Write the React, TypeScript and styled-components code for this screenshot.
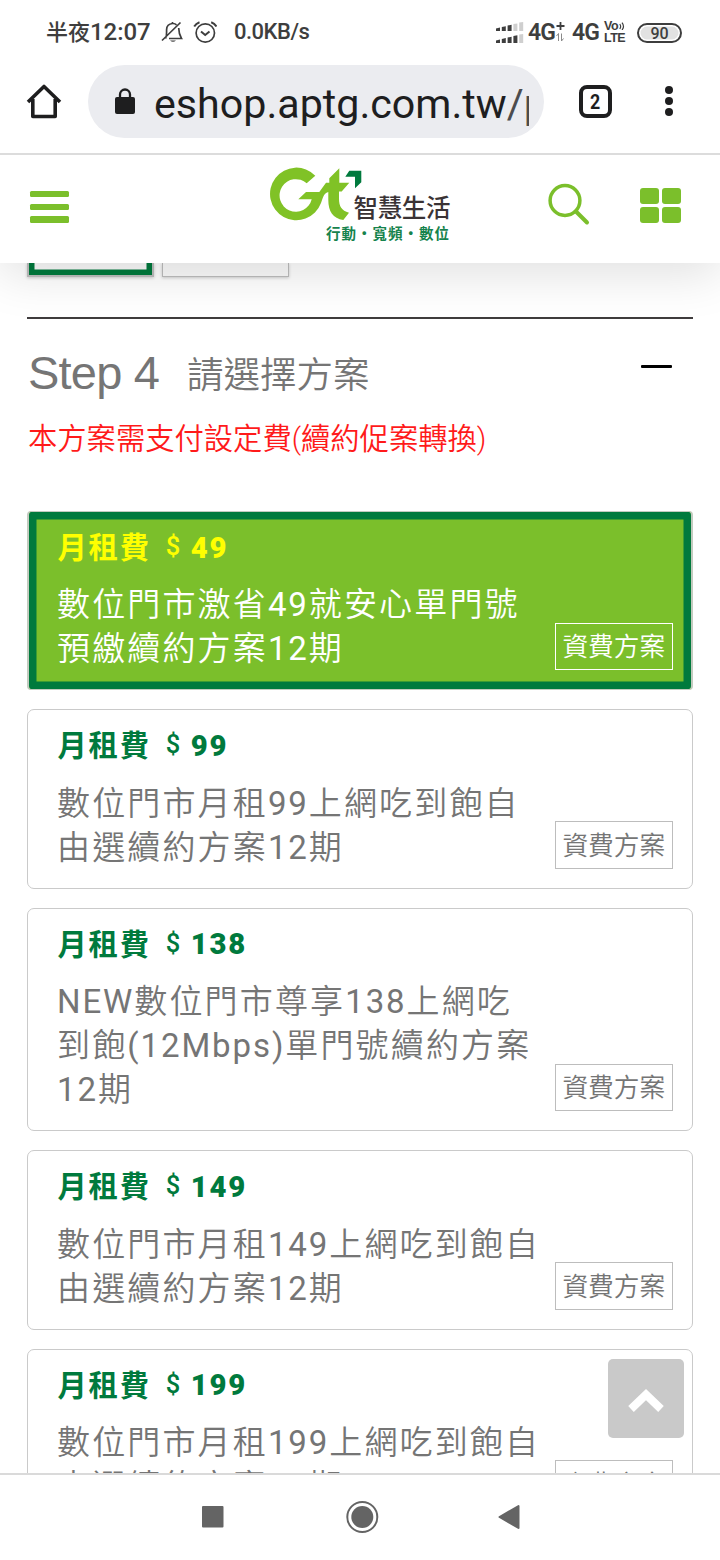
import React from "react";
import styled, { createGlobalStyle } from "styled-components";

const GREEN = "#7bbf2b";
const DEEP = "#007a3d";
const CJK = `"Noto Sans CJK TC"`;

const GlobalStyle = createGlobalStyle`
  * { box-sizing: border-box; }
  body { margin: 0; background: #fff; font-family: Roboto, ${CJK}, sans-serif; }
`;

const Screen = styled.div`
  width: 720px;
  height: 1560px;
  display: flex;
  flex-direction: column;
  overflow: hidden;
  background: #fff;
`;

const StatusBar = styled.div`
  position: relative;
  z-index: 2;
  background: #fff;
  height: 65px;
  flex: none;
  display: flex;
  align-items: center;
  padding: 0 38px 0 46px;
  color: #3e3e3e;
  font-size: 24px;
  font-weight: 500;
  line-height: 30px;
  white-space: nowrap;
`;
const Clock = styled.span`
  width: 115px;
  letter-spacing: -0.05px;
`;
const CjkPart = styled.span`
  font-size: 22px;
  letter-spacing: 0;
`;
const Speed = styled.span`
  margin: -2px 0 0 17px;
  font-size: 22px;
  letter-spacing: -0.5px;
`;
const Spacer = styled.div`
  flex: 1;
`;
const Network = styled.span<{ $gap: number }>`
  font-size: 23px;
  font-weight: 600;
  letter-spacing: -0.9px;
  margin-left: ${(p) => p.$gap}px;
`;
const VoLte = styled.span`
  display: flex;
  flex-direction: column;
  width: 23px;
  height: 23px;
  margin-left: 5px;
  font: 700 12.5px/11.5px "Liberation Sans", sans-serif;
  letter-spacing: -0.5px;
`;
const VoRow = styled.span`
  display: flex;
  gap: 1px;
`;
const Battery = styled.span`
  width: 45px;
  height: 20px;
  margin-left: 10px;
  border: 2px solid #3e3e3e;
  border-radius: 10px;
  background: #e2e2e2;
  box-shadow: inset 0 0 0 1.5px #fff;
  font-size: 16px;
  line-height: 17px;
  text-align: center;
`;

const BrowserBar = styled.div`
  position: relative;
  z-index: 2;
  background: #fff;
  height: 90px;
  flex: none;
  display: flex;
  align-items: flex-start;
  border-bottom: 2px solid #dcdcdc;
  padding-left: 26px;
`;
const BarIcon = styled.div<{ $width: number; $left?: number }>`
  width: ${(p) => p.$width}px;
  height: 73px;
  margin-left: ${(p) => p.$left ?? 0}px;
  display: flex;
  align-items: center;
`;
const AddressField = styled.div`
  width: 456px;
  height: 73px;
  margin-left: 26px;
  padding-left: 26px;
  display: flex;
  align-items: center;
  border-radius: 37px;
  background: #ebecf0;
`;
const Address = styled.div`
  width: 375px;
  margin-left: 18px;
  overflow: hidden;
  white-space: nowrap;
  color: #1e1e1f;
  font-size: 41.2px;
  line-height: 60px;
  padding-top: 4px;
`;
const AddressTail = styled.span`
  color: #4c4c4e;
`;
const TabCount = styled.div`
  width: 33px;
  height: 33px;
  border: 4px solid #1e1e1f;
  border-radius: 8px;
  color: #1e1e1f;
  font-size: 21px;
  font-weight: 700;
  line-height: 26px;
  text-align: center;
`;
const TabNumber = styled.span`
  display: inline-block;
  transform: scaleX(0.85);
`;

const SiteHeader = styled.header`
  position: relative;
  z-index: 1;
  height: 108px;
  flex: none;
  display: flex;
  align-items: flex-start;
  background: #fff;
  box-shadow: 0 10px 50px rgba(0, 0, 0, 0.13);
  padding: 0 39px 0 30px;
`;
const Burger = styled.div`
  width: 39px;
  margin-top: 36px;
  display: flex;
  flex-direction: column;
  gap: 6.3px;
`;
const BurgerLine = styled.i`
  height: 6.4px;
  border-radius: 1.5px;
  background: ${GREEN};
`;
const Logo = styled.svg`
  margin: 9px 0 0 197px;
`;
const SearchIcon = styled.svg`
  margin: 27px 0 0 91px;
`;
const Grid = styled.div`
  width: 41px;
  height: 35px;
  margin: 33px 0 0 auto;
  display: grid;
  grid-template-columns: 1fr 1fr;
  grid-template-rows: 1fr 1fr;
  gap: 3px;
`;
const GridTile = styled.i`
  border-radius: 3px;
  background: ${GREEN};
`;

const Page = styled.main`
  height: 1210px;
  flex: none;
  padding: 0 27px;
  overflow: hidden;
`;
const Options = styled.div`
  display: flex;
  gap: 8px;
`;
const Option = styled.div<{ $active?: boolean }>`
  width: 127px;
  height: 14px;
  border: solid #bdbdbd;
  border-width: ${(p) => (p.$active ? "0 2px 2px" : "0 1px 1px")};
  background: #fafafa;
  box-shadow: 0 1px 3px rgba(0, 0, 0, 0.2)
    ${(p) => (p.$active ? `, inset 5.5px 0 0 ${DEEP}, inset -5.5px -5.5px 0 ${DEEP}` : "")};
`;
const Section = styled.section`
  margin-top: 40px;
  border-top: 2px solid #3f3c3d;
`;
const SectionHead = styled.div`
  height: 96px;
  display: flex;
  align-items: center;
  padding: 15px 21px 0 1px;
  color: #757575;
`;
const StepNumber = styled.span`
  width: 159px;
  margin-top: -4px;
  font: 47px/60px "Liberation Sans", sans-serif;
  letter-spacing: -0.8px;
`;
const StepTitle = styled.h2`
  margin: 2px 0 0;
  font-size: 36.5px;
  font-weight: 350;
  line-height: 60px;
`;
const Minus = styled.i`
  width: 31px;
  height: 3px;
  margin: 0 0 16px auto;
  border-radius: 1px;
  background: #000;
`;
const Notice = styled.p`
  margin: 0 0 0 1px;
  height: 96px;
  padding-top: 3px;
  color: #ff1a1a;
  font-size: 29.3px;
  font-weight: 350;
  line-height: 42px;
`;

const Plans = styled.div`
  display: flex;
  flex-direction: column;
  gap: 19px;
`;
const Card = styled.article<{ $active: boolean }>`
  flex: none;
  padding: ${(p) => (p.$active ? "12.6px 18px 19.2px 28px" : "12.6px 19px 19.2px 29px")};
  border: solid ${(p) => (p.$active ? "#c3cbbf" : "#cacaca")};
  border-width: ${(p) => (p.$active ? "1px 2px" : "1px")};
  border-radius: ${(p) => (p.$active ? 4 : 7)}px;
  color: ${(p) => (p.$active ? "#fff" : "#757575")};
  background: ${(p) => (p.$active ? GREEN : "#fff")};
  box-shadow: ${(p) => (p.$active ? `inset 0 0 0 7.5px ${DEEP}` : "none")};
`;
const Fee = styled.div<{ $active: boolean }>`
  height: 46px;
  display: flex;
  align-items: center;
  color: ${(p) => (p.$active ? "#ffff00" : DEEP)};
  font-size: 29.3px;
  font-weight: 700;
  letter-spacing: 1.8px;
`;
const FeeLabel = styled.span`
  margin: -5px 0 0 0.5px;
`;
const Price = styled.span`
  font-weight: 900;
  letter-spacing: 1.7px;
`;
const Currency = styled.span`
  width: 25px;
  margin: -3px 0 0 15px;
  font-size: 25.5px;
  font-weight: 500;
`;
const PlanRow = styled.div`
  display: flex;
  justify-content: space-between;
  align-items: flex-end;
  margin-top: 11.2px;
`;
const PlanName = styled.div`
  position: relative;
  top: 1.5px;
  font-size: 33px;
  font-weight: 350;
  letter-spacing: 2.15px;
  line-height: 44.2px;
  white-space: nowrap;
`;
const Line = styled.div``;
const Latin = styled.span`
  font-weight: 400;
  letter-spacing: 1.9px;
`;
const RateButton = styled.button<{ $active: boolean }>`
  flex: none;
  width: 118.5px;
  height: 47.5px;
  padding: 2px 0 0;
  border: 1.5px solid ${(p) => (p.$active ? "#fff" : "#bdbdbd")};
  background: transparent;
  color: inherit;
  font: 350 25.7px/42px Roboto, ${CJK}, sans-serif;
`;

const ToTop = styled.button`
  position: absolute;
  z-index: 2;
  left: 608px;
  top: 1359px;
  width: 76px;
  height: 79px;
  padding: 7px 0 0;
  border: 0;
  border-radius: 5px;
  background: #c9c9c9;
`;

const NavBar = styled.nav`
  flex: 1;
  display: flex;
  justify-content: center;
  border-top: 2px solid #dadada;
  background: #fff;
`;

type Plan = { price: string; lines: string[]; active?: boolean };

const plans: Plan[] = [
  { price: "49", lines: ["數位門市激省49就安心單門號", "預繳續約方案12期"], active: true },
  { price: "99", lines: ["數位門市月租99上網吃到飽自", "由選續約方案12期"] },
  { price: "138", lines: ["NEW數位門市尊享138上網吃", "到飽(12Mbps)單門號續約方案", "12期"] },
  { price: "149", lines: ["數位門市月租149上網吃到飽自", "由選續約方案12期"] },
  { price: "199", lines: ["數位門市月租199上網吃到飽自", "由選續約方案12期"] },
];

// Latin runs carry a slightly heavier weight than the Chinese text around them.
const mixed = (text: string) =>
  text
    .split(/([\x20-\x7e]+)/)
    .filter(Boolean)
    .map((part, i) => (/^[\x20-\x7e]/.test(part) ? <Latin key={i}>{part}</Latin> : part));

function PlanCard({ price, lines, active = false }: Plan) {
  return (
    <Card $active={active}>
      <Fee $active={active}>
        <FeeLabel>月租費</FeeLabel>
        <Currency>$</Currency>
        <Price>{price}</Price>
      </Fee>
      <PlanRow>
        <PlanName>
          {lines.map((l) => (
            <Line key={l}>{mixed(l)}</Line>
          ))}
        </PlanName>
        <RateButton $active={active}>資費方案</RateButton>
      </PlanRow>
    </Card>
  );
}

const StatusIcons = () => (
  <svg width="56" height="24" viewBox="0 0 56 24" fill="none" stroke="#3e3e3e" strokeWidth="1.7">
    <path d="M4.5 17.5C6 15 5.500 12.500 5.600 8.500Q5.800 3 11.500 2.500Q14 2.300 15.500 3.800M17.700 7Q17.800 13 20.500 17.500H8M1 19.500L19.500 1.500M11.500 1V3" />
    <path d="M9 19.500H15Q12 22.200 9 19.500Z" fill="#3e3e3e" stroke="none" />
    <circle cx="44.300" cy="12" r="9.200" />
    <path d="M40 10.500L44.200 14L48.500 10.500" strokeWidth="2" />
    <path d="M33.200 5.500Q35 2.500 38.500 1.200M50.200 1.200Q53.700 2.500 55.400 5.500" strokeWidth="2" />
  </svg>
);

const Signal = () => (
  <svg width="28" height="22" viewBox="0 0 28 22">
    {[0, 1, 2, 3, 4].map((i) => (
      <React.Fragment key={i}>
        <path
          d={`M${i * 5.8} ${6.5 - i * 1.5}L${i * 5.8 + 4} ${5.6 - i * 1.4}V9H${i * 5.8}Z`}
          fill={i < 3 ? "#3e3e3e" : "#cfcfcf"}
        />
        <path
          d={`M${i * 5.8} ${18.5 - i * 1.5}L${i * 5.8 + 4} ${17.5 - i * 1.4}V21H${i * 5.8}Z`}
          fill={i < 4 ? "#3e3e3e" : "#cfcfcf"}
        />
      </React.Fragment>
    ))}
  </svg>
);

export default function App() {
  return (
    <Screen>
      <GlobalStyle />
      <StatusBar>
        <Clock>
          <CjkPart>半夜</CjkPart>12:07
        </Clock>
        <StatusIcons />
        <Speed>0.0KB/s</Speed>
        <Spacer />
        <Signal />
        <Network $gap={4}>4G</Network>
        <svg width="10" height="22" viewBox="0 0 10 22" fill="none" stroke="#3e3e3e">
          <path d="M5.500 0V8M1.500 4H9.500" strokeWidth="1.800" />
          <path d="M3.500 19V11.500L1.500 14M6.500 11.500V19L8.500 16.500" stroke="#8a8a8a" />
        </svg>
        <Network $gap={7}>4G</Network>
        <VoLte>
          <VoRow>
            Vo
            <svg width="6" height="9" viewBox="0 0 6 9" fill="none" stroke="#3e3e3e" strokeWidth="1.200">
              <path d="M0.800 3Q2.500 5.500 0.800 8M3 1.700Q6 5.500 3 9" />
            </svg>
          </VoRow>
          <span>LTE</span>
        </VoLte>
        <Battery>90</Battery>
      </StatusBar>

      <BrowserBar>
        <BarIcon $width={36}>
          <svg width="36" height="38" viewBox="0 0 36 38" fill="none" stroke="#1e1e1f" strokeWidth="3.600">
            <path d="M2 19L18 3.500L34 19M6.800 16V33.500H29.200V16" strokeLinejoin="round" />
          </svg>
        </BarIcon>
        <AddressField>
          <svg width="22" height="28" viewBox="0 0 22 28">
            <rect x="1" y="9" width="20" height="17" rx="2" fill="#1e1e1f" />
            <path d="M6 10V6.500a5 5 0 0 1 10 0V10" fill="none" stroke="#1e1e1f" strokeWidth="2.300" />
          </svg>
          <Address>
            eshop.aptg.com.tw<AddressTail>/p</AddressTail>
          </Address>
        </AddressField>
        <BarIcon $width={33} $left={35}>
          <TabCount>
            <TabNumber>2</TabNumber>
          </TabCount>
        </BarIcon>
        <BarIcon $width={10} $left={52}>
          <svg width="10" height="34" viewBox="0 0 10 34" fill="#1e1e1f">
            <circle cx="5" cy="5" r="4" />
            <circle cx="5" cy="16" r="4" />
            <circle cx="5" cy="27" r="4" />
          </svg>
        </BarIcon>
      </BrowserBar>

      <SiteHeader>
        <Burger>
          <BurgerLine />
          <BurgerLine />
          <BurgerLine />
        </Burger>
        <Logo width="190" height="84" viewBox="0 0 190 84">
          <path
            d="M49.300 11.700A26.300 26.300 0 1 0 55 39C57 34.500 57 29.500 62.300 28V36C62.300 47.500 67 54.500 77.300 56L83 48.700C75.500 46.500 73 42.500 73 34.500V27.500H75.700L83.300 18.700H73.300V4.300L63.300 14.300V18.700H60L53.300 28H40L32.300 35.300H45.700A16.300 16.300 0 1 1 40.700 19.300Z"
            fill="#80c226"
          />
          <path d="M83.300 6.700H95.300V18.300L89 24.300V12.700H79.300Z" fill={DEEP} />
          <text x="87.500" y="53" fontSize="24.500" fontWeight="500" textLength="97" fill="#3a3335">
            智慧生活
          </text>
          <text x="60" y="75" fontSize="14.500" fontWeight="700" textLength="123" fill="#16834d">
            行動・寬頻・數位
          </text>
        </Logo>
        <SearchIcon width="44" height="44" viewBox="0 0 44 44" fill="none" stroke={GREEN} strokeLinecap="round">
          <circle cx="18" cy="18.500" r="14.900" strokeWidth="3.500" />
          <path d="M29 29.500L40 40.500" strokeWidth="4" />
        </SearchIcon>
        <Grid>
          <GridTile />
          <GridTile />
          <GridTile />
          <GridTile />
        </Grid>
      </SiteHeader>

      <Page>
        <Options>
          <Option $active />
          <Option />
        </Options>
        <Section>
          <SectionHead>
            <StepNumber>Step 4</StepNumber>
            <StepTitle>請選擇方案</StepTitle>
            <Minus />
          </SectionHead>
          <Notice>本方案需支付設定費(續約促案轉換)</Notice>
          <Plans>
            {plans.map((p) => (
              <PlanCard key={p.price} {...p} />
            ))}
          </Plans>
        </Section>
      </Page>

      <ToTop aria-label="回到頂端">
        <svg width="38" height="26" viewBox="0 0 38 26" fill="none" stroke="#fff" strokeWidth="8">
          <path d="M4 21L19 6.500L34 21" />
        </svg>
      </ToTop>

      <NavBar>
        <svg width="720" height="84" viewBox="0 0 720 84" fill="#646464">
          <rect x="202" y="31" width="21.500" height="21.500" rx="1" />
          <circle cx="362.300" cy="42" r="11" />
          <circle cx="362.300" cy="42" r="15" fill="none" stroke="#646464" strokeWidth="2" />
          <path d="M499.500 42L518.500 31V53Z" stroke="#646464" strokeWidth="2" strokeLinejoin="round" />
        </svg>
      </NavBar>
    </Screen>
  );
}
